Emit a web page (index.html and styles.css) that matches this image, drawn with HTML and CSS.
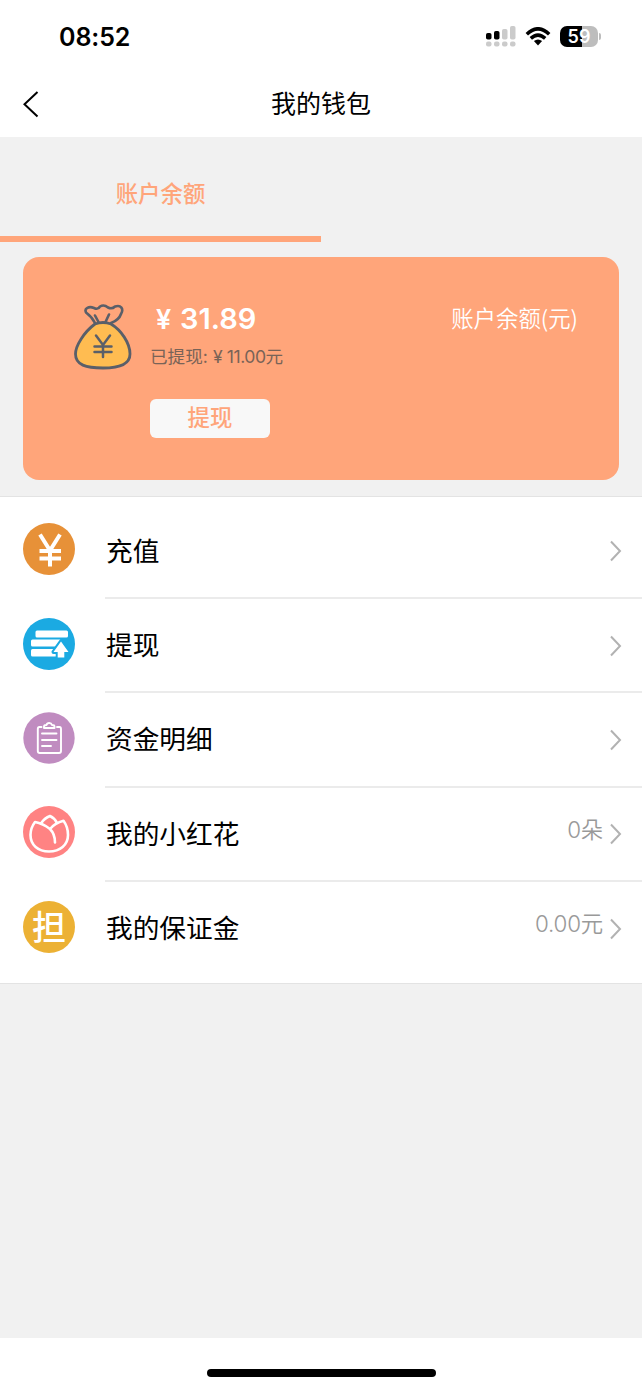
FILE: index.html
```html
<!DOCTYPE html>
<html lang="zh-CN">
<head>
<meta charset="utf-8">
<title>我的钱包</title>
<link rel="stylesheet" href="styles.css">
</head>
<body>
<header class="header">
  <div class="status">
    <span class="time">08:52</span>
    <div class="status-icons">
      <svg width="31" height="21" viewBox="0 0 31 21">
        <g fill="#000"><rect x="0" y="7" width="5.500" height="6.500" rx="1.800"/><rect x="8" y="5" width="5.500" height="8.500" rx="1.800"/></g>
        <g fill="#cbcbcb"><rect x="16" y="3" width="5.500" height="10.500" rx="1.800"/><rect x="24" y="0" width="5.500" height="13.500" rx="1.800"/><rect x="0" y="15.500" width="5.500" height="5" rx="2"/><rect x="8" y="15.500" width="5.500" height="5" rx="2"/><rect x="16" y="15.500" width="5.500" height="5" rx="2"/><rect x="24" y="15.500" width="5.500" height="5" rx="2"/></g>
      </svg>
      <svg class="wifi" width="26" height="19" viewBox="0 0 26 19">
        <path d="M1.800 7.200Q13-3.600 24.200 7.200M5.800 11.400Q13 4.800 20.200 11.400" fill="none" stroke="#000" stroke-width="3.500"/>
        <path d="M8.900 14.100Q13 10.800 17.100 14.100L13 18.500Z"/>
      </svg>
      <div class="battery"><span>59</span></div>
      <i class="battery-cap"></i>
    </div>
  </div>
  <nav class="nav">
    <svg class="back" width="18" height="28" viewBox="0 0 18 28"><path d="M15.500 2L2.500 14.300L15.500 26.500" fill="none" stroke="#000" stroke-width="2"/></svg>
    <h1 class="title">我的钱包</h1>
  </nav>
</header>

<main class="main">
  <div class="tabs"><div class="tab">账户余额</div></div>
  <section class="card">
    <svg class="bag" width="60" height="68" viewBox="0 0 60 68">
      <path d="M21 20C10 28 1.500 42 1.500 50C1.500 61 12 64 29 64S56 60 56 50C56 39 47 26 37 20Q29 17 21 20Z" fill="#ffbc51" stroke="#5a5f69" stroke-width="2.800"/>
      <path d="M21 19Q18 13 12 8.500C10 4 15 2 20 4Q24 6 26 2.500Q30 0 34 3.500Q38 5.500 41 2.500C47 .500 50 5 47 10Q45 16 37 19M24.500 18L21 11.500M31.500 18L35 10.500" fill="none" stroke="#5a5f69" stroke-width="2.600" stroke-linecap="round" stroke-linejoin="round"/>
      <path d="M22 31.500L29 41L36 31.500M29 41V53M20.500 42.500H37.500M20.500 48H37.500" fill="none" stroke="#5a5f69" stroke-width="2.500" stroke-linecap="round"/>
    </svg>
    <div class="balance">
      <div class="amount"><span class="yen">¥</span>31.89</div>
      <div class="withdrawn">已提现:<span class="yen">¥</span><span class="sum">11.00</span>元</div>
      <button class="withdraw">提现</button>
    </div>
    <div class="label">账户余额(元)</div>
  </section>

  <section class="list">
    <div class="row">
      <svg class="icon" width="52" height="52" viewBox="0 0 52 52"><circle cx="26" cy="26" r="26" fill="#e79138"/><path d="M17 11.500L27 27.500L37 11.500M27 26V43.500M16.500 28H38M16.500 35.500H38" fill="none" stroke="#fff" stroke-width="4"/></svg>
      <div class="cell"><span class="name">充值</span><svg class="chevron" width="13" height="22" viewBox="0 0 13 22"><path d="M2 1.500L11 11L2 20.500"/></svg></div>
    </div>
    <div class="row">
      <svg class="icon" width="52" height="52" viewBox="0 0 52 52"><circle cx="26" cy="26" r="26" fill="#1baae2"/><g fill="#fff"><rect x="12.500" y="12.500" width="32.500" height="7" rx="1.500"/><rect x="8" y="21.500" width="30" height="7" rx="1.500"/><rect x="8" y="31" width="26" height="7.500" rx="1.500"/></g><path d="M38 23.500L45.500 34H41.300V39.500H34.700V34H30.500Z" fill="#fff" stroke="#1baae2" stroke-width="4" paint-order="stroke" stroke-linejoin="round"/></svg>
      <div class="cell"><span class="name">提现</span><svg class="chevron" width="13" height="22" viewBox="0 0 13 22"><path d="M2 1.500L11 11L2 20.500"/></svg></div>
    </div>
    <div class="row">
      <svg class="icon" width="52" height="52" viewBox="0 0 52 52"><circle cx="26" cy="26" r="25.700" fill="#c08cc0"/><g fill="none" stroke="#fff" stroke-width="1.900" stroke-linecap="round" stroke-linejoin="round"><path d="M18.500 15H16.500Q14.800 15 14.800 17V39Q14.800 41 16.800 41H36Q38 41 38 39V17Q38 15 36.500 15H34M21 16V14.500Q21 13 23.500 13Q24 11 26.200 11T29 13Q31.500 13 31.500 14.500V16ZM19 21.500H33.500M19 28H33.500M19 34H28"/></g></svg>
      <div class="cell"><span class="name">资金明细</span><svg class="chevron" width="13" height="22" viewBox="0 0 13 22"><path d="M2 1.500L11 11L2 20.500"/></svg></div>
    </div>
    <div class="row">
      <svg class="icon" width="52" height="52" viewBox="0 0 52 52"><circle cx="26" cy="26" r="26" fill="#ff8383"/><path d="M12 16Q7.500 22 7.500 29C7.500 39 15 45.500 26 45.500S45 39 45 29Q45 21 40.500 14.800Q32 17 27 23Q20 17.500 12 16ZM18 17.500Q21.500 12 27 10Q31.500 12 34 17M27 23Q32 28 32 36.500" fill="none" stroke="#fff" stroke-width="2.600" stroke-linecap="round" stroke-linejoin="round"/></svg>
      <div class="cell"><span class="name">我的小红花</span><span class="value">0朵</span><svg class="chevron" width="13" height="22" viewBox="0 0 13 22"><path d="M2 1.500L11 11L2 20.500"/></svg></div>
    </div>
    <div class="row">
      <div class="icon icon-dan">担</div>
      <div class="cell"><span class="name">我的保证金</span><span class="value">0.00元</span><svg class="chevron" width="13" height="22" viewBox="0 0 13 22"><path d="M2 1.500L11 11L2 20.500"/></svg></div>
    </div>
  </section>
</main>
<footer class="footer"><div class="home"></div></footer>
</body>
</html>
```
FILE: styles.css
```css
* { box-sizing: border-box; }
body {
  margin: 0;
  height: 1389px;
  display: flex;
  flex-direction: column;
  background: #f1f1f1;
  color: #000;
  font-family: Inter, "Noto Sans CJK SC", sans-serif;
  overflow: hidden;
}
svg { display: block; flex: none; }
.header { height: 137px; background: #fff; flex: none; }
.status {
  height: 72px;
  padding: 0 41px 0 59px;
  display: flex;
  align-items: center;
  justify-content: space-between;
}
.time { font-size: 25px; font-weight: 600; line-height: 30px; letter-spacing: -.1px; margin-top: 2px; }
.status-icons { display: flex; align-items: center; }
.wifi { margin: 0 9px 0 8px; }
.battery {
  width: 38px;
  height: 21px;
  border-radius: 7px;
  background: linear-gradient(90deg, #000 59%, #bdbdbd 59%);
  color: #fff;
  font-size: 18px;
  font-weight: 600;
  line-height: 21px;
  text-align: center;
}
.battery-cap { width: 2px; height: 7px; margin-left: 1px; border-radius: 0 2px 2px 0; background: #bdbdbd; }
.nav { height: 65px; display: grid; grid-template-columns: 52px 1fr 52px; align-items: center; }
.back { margin: -2px 0 0 22px; }
.title { margin: -1px 0 0; font-size: 25px; font-weight: 400; line-height: 36px; text-align: center; }
.main { flex: 1; }
.tabs { height: 104.500px; display: flex; }
.tab {
  width: 50%;
  border-bottom: 6px solid #ffa57a;
  color: #ffa57a;
  font-size: 22.400px;
  font-weight: 500;
  line-height: 114px;
  text-align: center;
}
.card {
  height: 223px;
  margin: 15px 23px 16px;
  padding: 47px 41px 0 51px;
  border-radius: 16px;
  background: #ffa57a;
  display: flex;
  align-items: flex-start;
}
.balance { margin-left: 16px; }
.amount { padding-left: 6px; font-size: 29px; line-height: 30px; font-weight: 600; color: #fff; white-space: nowrap; }
.amount .yen { display: inline-block; width: 24px; font-size: 27px; }
.withdrawn { margin-top: 9px; font-size: 17.600px; line-height: 26px; color: #796357; white-space: nowrap; }
.withdrawn .yen { display: inline-block; width: 18px; margin-left: 1px; text-align: center; }
.sum { letter-spacing: -.5px; }
.withdraw {
  display: block;
  width: 120px;
  height: 39px;
  margin: 29px 0 0;
  padding: 0 0 4px;
  border: 0;
  border-radius: 6px;
  background: #f8f8f8;
  color: #ffa57a;
  font: 500 22.400px/34px "Noto Sans CJK SC", sans-serif;
}
.label { margin: -2px 0 0 auto; color: #fff; font: 350 22.400px/30px "Noto Sans CJK SC", sans-serif; }
.list { height: 488px; padding: 8px 0 0 23px; border: solid #e3e3e3; border-width: 1px 0; background: #fff; }
.row { height: 94.400px; display: flex; align-items: center; }
.icon { margin-top: -5px; }
.icon-dan {
  flex: none;
  width: 52px;
  height: 52px;
  border-radius: 50%;
  background: #ecb134;
  color: #fff;
  font: 500 34px/50px "Noto Sans CJK SC", sans-serif;
  text-align: center;
}
.cell {
  flex: 1;
  height: 100%;
  margin-left: 30px;
  padding-right: 20px;
  border-bottom: 2px solid #ebebeb;
  display: flex;
  align-items: center;
}
.row:last-child .cell { border-bottom-color: transparent; }
.name { flex: 1; padding-left: 1px; font-size: 26.700px; line-height: 40px; }
.value { margin: -8px 6px 0 0; color: #999; font: 350 22.400px/32px Inter, "Noto Sans CJK SC", sans-serif; letter-spacing: -.2px; }
.chevron { margin-top: 1px; fill: none; stroke: #b2b2b2; stroke-width: 2; }
.footer { flex: none; height: 51px; padding-top: 31px; background: #fff; }
.home { width: 229px; height: 8px; margin: 0 auto; border-radius: 4px; background: #000; }
```
